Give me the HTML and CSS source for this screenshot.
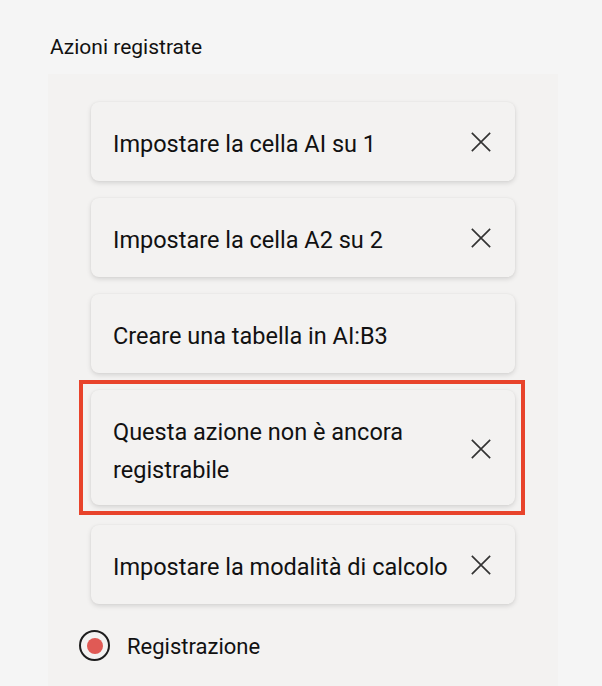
FILE: index.html
```html
<!DOCTYPE html>
<html lang="it">
<head>
<meta charset="utf-8">
<link rel="stylesheet" href="styles.css">
</head>
<body>
<div class="page">
  <div class="title">Azioni registrate</div>
  <div class="panel">
    <div class="list">
      <div class="card">
        <span class="label">Impostare la cella AI su 1</span>
        <svg class="close" viewBox="0 0 24 24"><path d="M2 2L22 22M22 2L2 22"/></svg>
      </div>
      <div class="card">
        <span class="label">Impostare la cella A2 su 2</span>
        <svg class="close" viewBox="0 0 24 24"><path d="M2 2L22 22M22 2L2 22"/></svg>
      </div>
      <div class="card">
        <span class="label">Creare una tabella in AI:B3</span>
      </div>
      <div class="card highlighted">
        <span class="label">Questa azione non è ancora registrabile</span>
        <svg class="close" viewBox="0 0 24 24"><path d="M2 2L22 22M22 2L2 22"/></svg>
      </div>
      <div class="card">
        <span class="label">Impostare la modalità di calcolo</span>
        <svg class="close" viewBox="0 0 24 24"><path d="M2 2L22 22M22 2L2 22"/></svg>
      </div>
    </div>
    <div class="record">
      <span class="radio"><span class="dot"></span></span>
      <span class="record-label">Registrazione</span>
    </div>
  </div>
</div>
</body>
</html>
```
FILE: styles.css
```css
html, body {
  margin: 0;
  padding: 0;
  background: #f5f5f5;
  font-family: Roboto, "Liberation Sans", sans-serif;
  color: #111;
}
.page {
  padding: 34px 44px 0 48px;
  height: 686px;
  box-sizing: border-box;
  display: flex;
  flex-direction: column;
}
.title {
  font-size: 21px;
  line-height: 26px;
  padding-left: 2px;
  margin-bottom: 14px;
}
.panel {
  flex: 1;
  background: #f3f2f1;
  padding: 28px 43px 0 43px;
}
.list {
  display: flex;
  flex-direction: column;
  gap: 17px;
}
.list .highlighted {
  padding-bottom: 16px;
  margin-bottom: 3px;
}
.card {
  position: relative;
  display: flex;
  align-items: center;
  gap: 12px;
  background: #f3f2f1;
  border-radius: 8px;
  box-shadow: 0 2px 5px rgba(0, 0, 0, 0.13), 0 0 2px rgba(0, 0, 0, 0.05);
  padding: 23px 23px 18px 22px;
  min-height: 38px;
}
.label {
  flex: 1;
  font-size: 23.5px;
  line-height: 38px;
  color: #111;
}
.close {
  width: 22px;
  height: 22px;
  flex: none;
  margin-top: -4px;
  stroke: #333;
  stroke-width: 1.8;
  fill: none;
}
.highlighted::after {
  content: "";
  position: absolute;
  top: -10px;
  left: -12px;
  right: -10px;
  bottom: -10px;
  border: 4px solid #e8432b;
  pointer-events: none;
}
.record {
  display: flex;
  align-items: center;
  gap: 17px;
  margin-top: 25px;
  margin-left: -12px;
}
.radio {
  width: 27px;
  height: 27px;
  border: 2.5px solid #1e1e1e;
  border-radius: 50%;
  display: flex;
  align-items: center;
  justify-content: center;
}
.dot {
  width: 16px;
  height: 16px;
  border-radius: 50%;
  background: #e05a55;
}
.record-label {
  font-size: 22px;
  line-height: 30px;
  padding-top: 3px;
  color: #111;
}
```
